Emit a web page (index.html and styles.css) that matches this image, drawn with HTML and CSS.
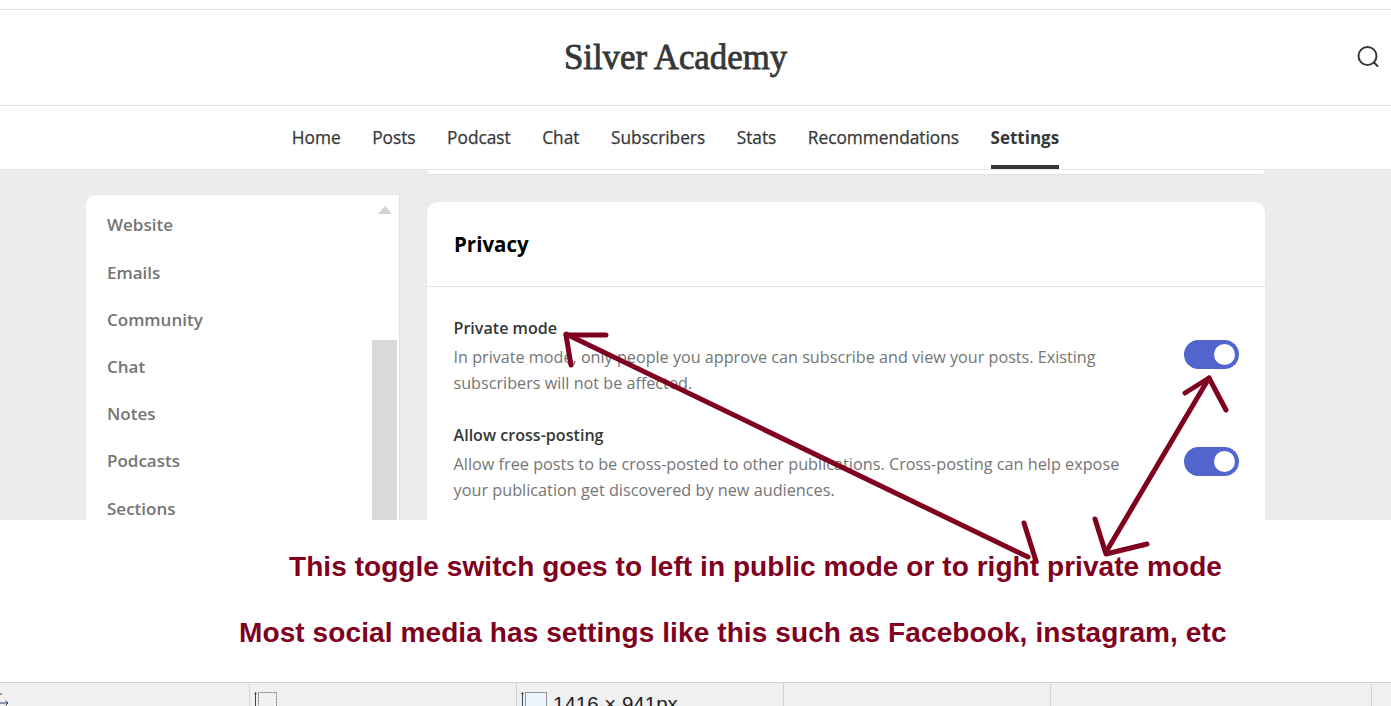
FILE: index.html
```html
<!DOCTYPE html>
<html lang="en">
<head>
<meta charset="utf-8">
<title>Silver Academy</title>
<link rel="stylesheet" href="styles.css">
</head>
<body>
<div class="page">
  <div class="topgap"></div>
  <header class="masthead">
    <h1 class="brand">Silver Academy</h1>
    <svg class="search" width="26" height="26" viewBox="0 0 26 26" fill="none" stroke="#363737" stroke-width="2" stroke-linecap="round"><circle cx="12.500" cy="12" r="9"/><path d="M19 18.500l3.500 3.500"/></svg>
  </header>
  <nav class="tabs">
    <a class="tab">Home</a>
    <a class="tab">Posts</a>
    <a class="tab">Podcast</a>
    <a class="tab">Chat</a>
    <a class="tab">Subscribers</a>
    <a class="tab">Stats</a>
    <a class="tab">Recommendations</a>
    <a class="tab active">Settings</a>
  </nav>
  <main class="workspace">
    <aside class="sidebar">
      <ul class="menu">
        <li>Website</li>
        <li>Emails</li>
        <li>Community</li>
        <li>Chat</li>
        <li>Notes</li>
        <li>Podcasts</li>
        <li>Sections</li>
      </ul>
      <div class="scrollbar">
        <span class="scroll-up"></span>
        <span class="scroll-thumb"></span>
      </div>
    </aside>
    <section class="content">
      <div class="card-stub"></div>
      <div class="card">
        <h2 class="card-title">Privacy</h2>
        <div class="setting setting-first">
          <div class="setting-text">
            <h3>Private mode</h3>
            <p>In private mode, only people you approve can subscribe and view your posts. Existing subscribers will not be affected.</p>
          </div>
          <span class="toggle"></span>
        </div>
        <div class="setting">
          <div class="setting-text">
            <h3>Allow cross-posting</h3>
            <p>Allow free posts to be cross-posted to other publications. Cross-posting can help expose your publication get discovered by new audiences.</p>
          </div>
          <span class="toggle"></span>
        </div>
      </div>
    </section>
  </main>
  <section class="notes">
    <p class="note note-one">This toggle switch goes to left in public mode or to right private mode</p>
    <p class="note note-two">Most social media has settings like this such as Facebook, instagram, etc</p>
  </section>
  <footer class="statusbar">
    <div class="cell cell-move">
      <svg width="10" height="14" viewBox="0 0 10 14" fill="none" stroke="#1f3a5f" stroke-width="1"><path d="M0 10h8M5.500 7.500L8 10 5.500 12.500M1 0v2"/></svg>
    </div>
    <div class="cell cell-sel">
      <svg width="28" height="24" viewBox="0 0 28 24" fill="none"><path d="M3.500 4v20" stroke="#33475f"/><path d="M2 5l1.500-2L5 5z" fill="#33475f"/><rect x="6.500" y="3.500" width="18" height="24" stroke="#6f7d8c" stroke-dasharray="2 1"/></svg>
    </div>
    <div class="cell cell-size">
      <svg width="28" height="24" viewBox="0 0 28 24" fill="none"><path d="M3.500 4v20" stroke="#33475f"/><path d="M2 5l1.500-2L5 5z" fill="#33475f"/><rect x="6.500" y="3.500" width="21" height="24" fill="#eef5fa" stroke="#8a96a3"/></svg>
      <span>1416 × 941px</span>
    </div>
    <div class="cell cell-plain"></div>
    <div class="cell cell-plain"></div>
    <div class="cell cell-end"></div>
  </footer>
  <svg class="ink" width="1391" height="706" viewBox="0 0 1391 706" fill="none" stroke="#800020" stroke-width="5" stroke-linecap="round" stroke-linejoin="round">
    <path d="M566 334L1028 557"/>
    <path d="M606 335H566L571 365"/>
    <path d="M1024 523L1036 561"/>
    <path d="M1209 378L1106 552"/>
    <path d="M1185 393L1209 378L1226 410"/>
    <path d="M1095 519L1106 554L1147 544"/>
  </svg>
</div>
</body>
</html>
```
FILE: styles.css
```css
* { box-sizing: border-box; }
html, body { margin: 0; padding: 0; }
body { background: #fff; font-family: "Open Sans", "Noto Sans", sans-serif; color: #363737; overflow: hidden; }
.page { position: relative; width: 1391px; height: 706px; display: flex; flex-direction: column; overflow: hidden; }

.topgap { height: 10px; flex: none; border-bottom: 1px solid #e4e4e4; }
.masthead { height: 96px; flex: none; display: flex; align-items: center; justify-content: center; position: relative; border-bottom: 1px solid #e4e4e4; }
.brand { margin: 0 0 0 -40px; font-family: "Liberation Serif", serif; font-size: 34.800px; font-weight: 400; -webkit-text-stroke: 0.8px #363737; color: #363737; }
.search { position: absolute; right: 10px; top: 34px; }

.tabs { height: 64px; flex: none; display: flex; justify-content: center; gap: 31.500px; border-bottom: 1px solid #e4e4e4; padding-right: 40px; }
.tab { display: flex; align-items: center; height: 63px; padding-top: 4px; font-size: 17.300px; font-weight: 500; -webkit-text-stroke: 0.25px #363737; color: #363737; border-bottom: 4px solid transparent; }
.tab.active { font-weight: 700; font-size: 17px; -webkit-text-stroke: 0; border-bottom-color: #363737; }

.workspace { height: 350px; flex: none; background: #ececec; display: flex; gap: 28px; padding-left: 86px; overflow: hidden; }
.sidebar { width: 313px; height: 340px; margin-top: 25px; background: #fff; border-radius: 10px 0 0 0; box-shadow: 1px 0 2px rgba(0,0,0,.06); display: flex; justify-content: space-between; flex: none; }
.menu { list-style: none; margin: 0; padding: 6.400px 0 0 21px; }
.menu li { height: 47.200px; display: flex; align-items: center; font-size: 17px; font-weight: 600; color: #757575; }
.scrollbar { width: 25px; margin-right: 2px; display: flex; flex-direction: column; align-items: center; background: #fff; position: relative; }
.scroll-up { width: 0; height: 0; margin-top: 11px; border-left: 7px solid transparent; border-right: 7px solid transparent; border-bottom: 8px solid #d3d3d3; }
.scroll-thumb { width: 25px; height: 180px; margin-top: 126px; background: #d9d9d9; }

.content { width: 838px; flex: none; display: flex; flex-direction: column; }
.card-stub { height: 4px; flex: none; background: #fff; border-radius: 0 0 10px 10px; box-shadow: 0 1px 2px rgba(0,0,0,.06); }
.card { margin-top: 28px; background: #fff; border-radius: 10px 10px 0 0; height: 400px; box-shadow: 0 0 2px rgba(0,0,0,.05); }
.card-title { margin: 0; height: 85px; display: flex; align-items: center; padding-left: 27px; font-size: 20.500px; font-weight: 700; color: #000; border-bottom: 1px solid #e4e4e4; }
.setting { display: flex; justify-content: space-between; align-items: flex-start; padding: 0 26px 0 26.500px; height: 107px; }
.setting-first { padding-top: 29px; height: 136px; }
.setting-text { width: 680px; }
.setting-text h3 { margin: 0; height: 28px; font-size: 16.100px; line-height: 24px; font-weight: 600; color: #363737; }
.setting-text p { margin: 0; font-size: 16.250px; line-height: 26px; color: #757575; }
.setting-first .setting-text p { font-size: 16.180px; }
.toggle { width: 55px; height: 29px; margin-top: 24px; border-radius: 15px; background: #5265cc; display: flex; justify-content: flex-end; align-items: center; padding-right: 4px; flex: none; }
.toggle::after { content: ""; width: 21px; height: 21px; border-radius: 50%; background: #fff; }

.notes { height: 162px; flex: none; background: #fff; position: relative; }
.note { position: absolute; margin: 0; font-family: "Liberation Sans", Arial, sans-serif; font-weight: 700; font-size: 28px; line-height: 32px; color: #800020; white-space: nowrap; }
.note-one { left: 289px; top: 31px; letter-spacing: .06px; }
.note-two { left: 239px; top: 97px; letter-spacing: .1px; }

.statusbar { height: 24px; flex: none; background: #f0f0f0; border-top: 1px solid #d0d0d0; display: flex; overflow: hidden; }
.cell { height: 100%; border-right: 1px solid #d4d4d4; display: flex; align-items: flex-start; padding-top: 1px; flex: none; margin-top: 1px; }
.cell-move { width: 250px; }
.cell-sel { width: 267px; padding-left: 2px; padding-top: 6px; margin-top: 0; }
.cell-size { width: 267px; padding-left: 2px; padding-top: 6px; margin-top: 0; font-family: "Liberation Sans", Arial, sans-serif; font-size: 20.500px; color: #222; }
.cell-size span { margin-top: 3px; margin-left: 6px; white-space: nowrap; }
.cell-move svg { margin-top: 8px; }
.cell-plain { width: 267px; }
.cell-plain + .cell-plain { width: 321px; }
.cell-end { flex: 1; border-right: 0; }

.ink { position: absolute; left: 0; top: 0; pointer-events: none; }
```
